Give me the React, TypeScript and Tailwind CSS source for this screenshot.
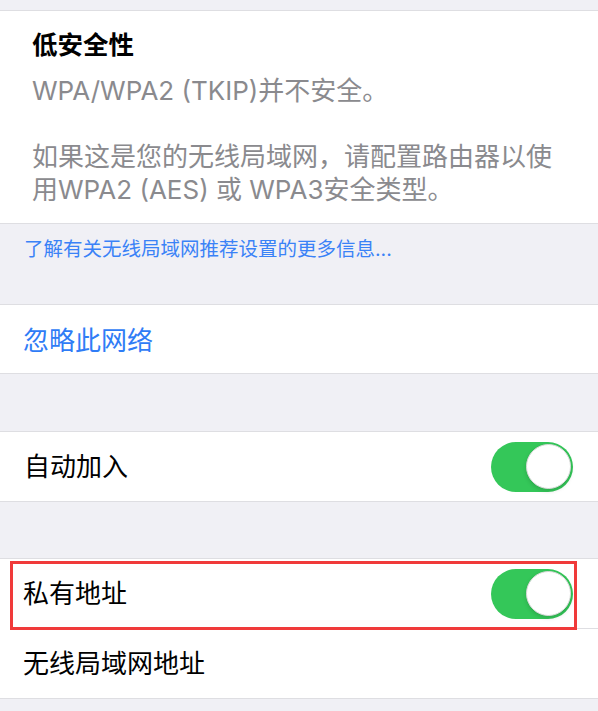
import React from 'react';

const font = { fontFamily: '"Inter", "Noto Sans CJK SC", sans-serif' };

const Toggle: React.FC = () => (
    <div className="flex h-[50px] w-[82px] items-center justify-end rounded-full bg-[#34c759] pr-[2px]">
        <div className="h-[45px] w-[45px] rounded-full border border-[#d9d9d9] bg-white shadow-[0_2px_4px_rgba(0,0,0,0.15)]" />
    </div>
);

const App: React.FC = () => {
    return (
        <div className="min-h-[711px] w-[598px] bg-[#f0f0f5]" style={font}>
            <div className="h-[10px]" />

            {/* security warning */}
            <div className="border-y border-[#dedee2] bg-white pb-[17px] pl-[32px] pr-[20px] pt-[17px]">
                <div className="text-[25.5px] font-semibold leading-[33px] text-black">低安全性</div>
                <div className="mt-[13px] text-[26px] leading-[33px] text-[#8a8a8e]">
                    <p>WPA/WPA2 (TKIP)并不安全。</p>
                    <p className="mt-[33px]">
                        如果这是您的无线局域网，请配置路由器以使
                        <br />
                        用WPA2 (AES) 或 WPA3安全类型。
                    </p>
                </div>
            </div>

            <div className="h-[80px] pl-[24px] pt-[13px]">
                <span className="text-[19.5px] leading-[24px] text-[#3a82f7]">了解有关无线局域网推荐设置的更多信息...</span>
            </div>

            <div className="flex h-[70px] items-center border-y border-[#dedee2] bg-white pl-[23px]">
                <span className="pt-[3px] text-[26px] text-[#2f7cf6]">忽略此网络</span>
            </div>

            <div className="h-[57px]" />

            <div className="flex h-[71px] items-center justify-between border-y border-[#dedee2] bg-white pl-[24px] pr-[25px]">
                <span className="text-[26px] text-black">自动加入</span>
                <Toggle />
            </div>

            <div className="h-[56px]" />

            <div className="border-y border-[#dedee2] bg-white">
                <div className="relative flex h-[69px] items-center justify-between pl-[23px] pr-[25px]">
                    <span className="text-[26px] text-black">私有地址</span>
                    <Toggle />
                    <div className="pointer-events-none absolute left-[10px] top-[2px] h-[69px] w-[567px] border-[3px] border-[#f03a3a]" />
                </div>
                <div className="ml-[23px] border-t border-[#dedee2]" />
                <div className="flex h-[69px] items-center pl-[23px]">
                    <span className="text-[26px] text-black">无线局域网地址</span>
                </div>
            </div>
        </div>
    );
};

export default App;
